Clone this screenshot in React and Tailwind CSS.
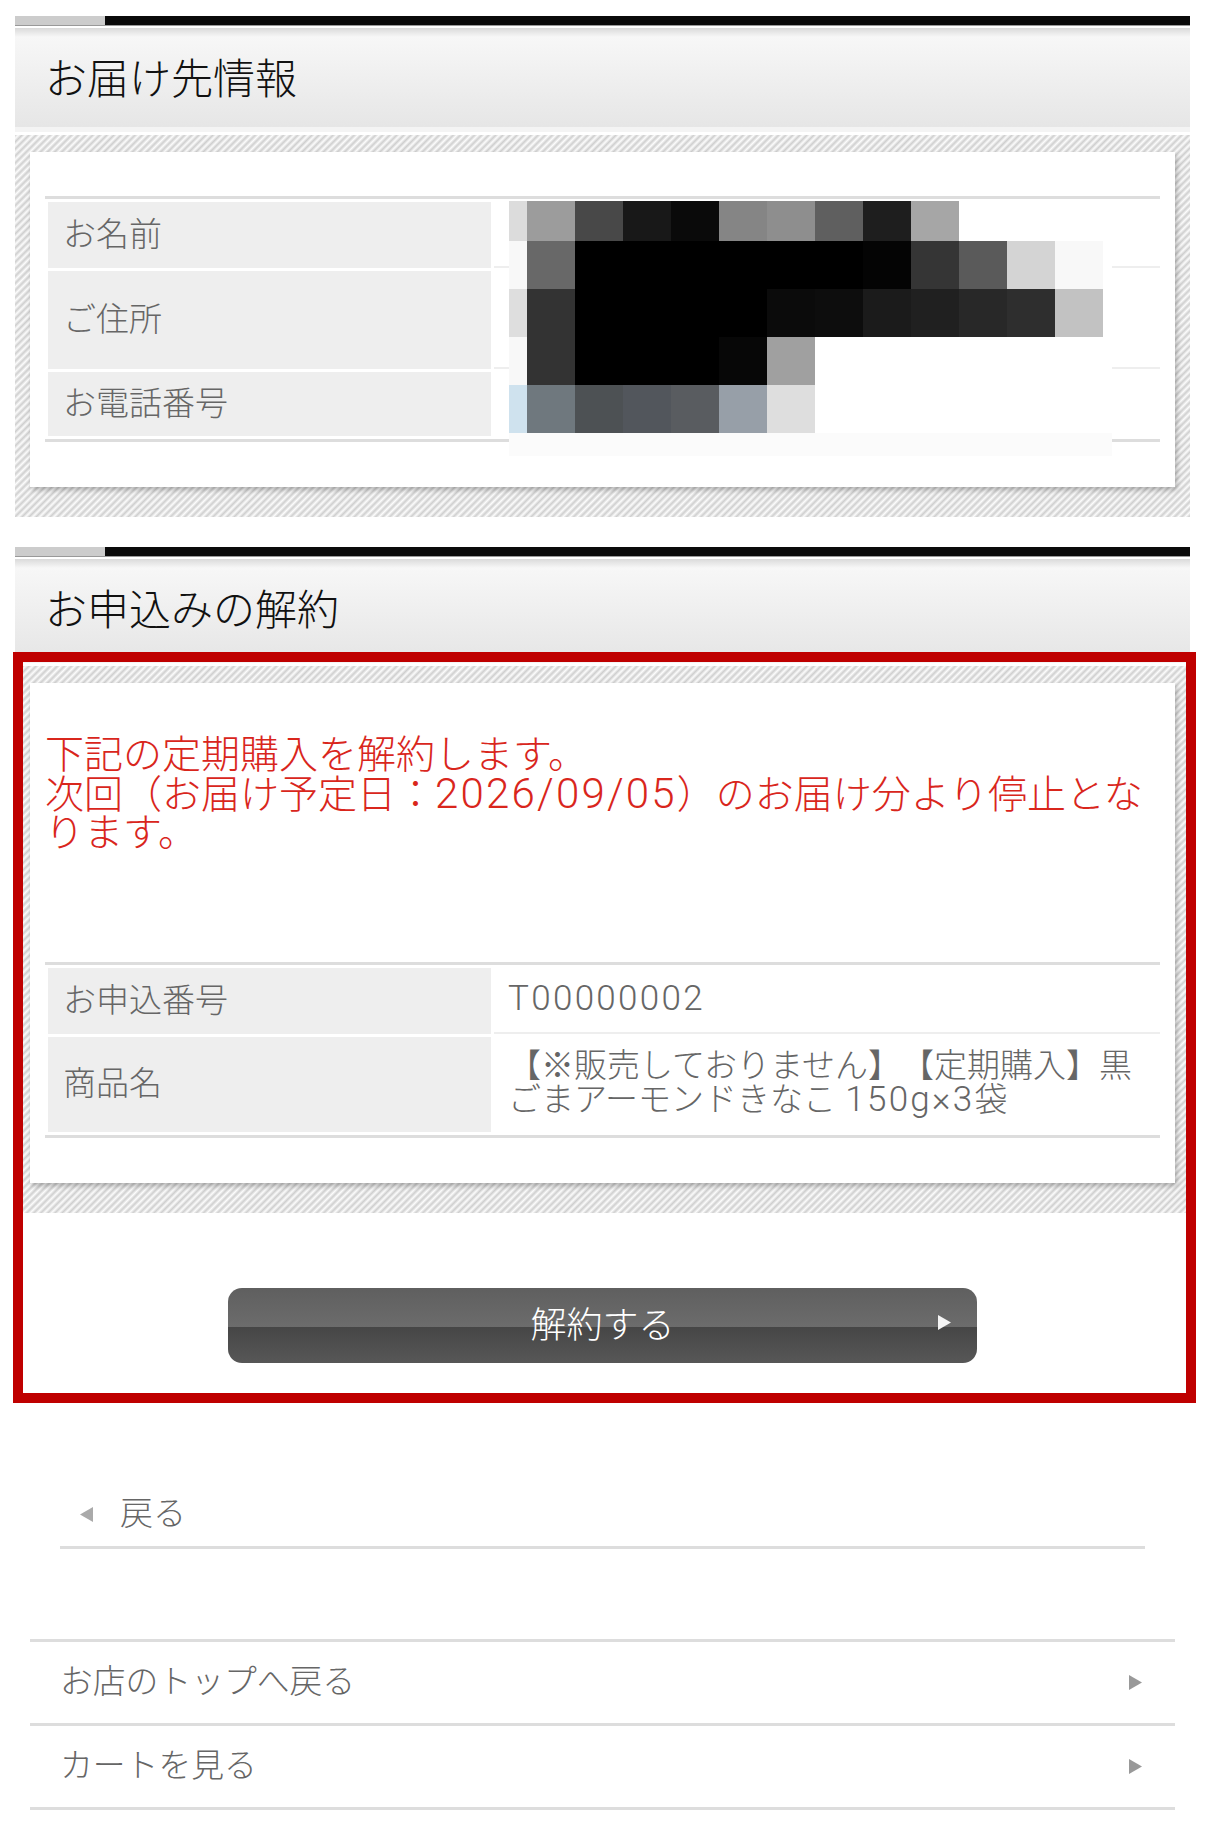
import React from "react";

const hatch =
  "bg-[repeating-linear-gradient(135deg,#cfcfcf_0,#fcfcfc_2.5px,#cfcfcf_5px)]";

// pixelated block over the customer's details
const mosaic = [
  { y: 0, h: 40, cells: ["#dcdcdc", "#9c9c9c", "#484848", "#181818", "#0a0a0a", "#858585", "#8e8e8e", "#5f5f5f", "#1e1e1e", "#a6a6a6"] },
  { y: 40, h: 48, cells: ["#f8f8f8", "#686868", "#000", "#000", "#000", "#000", "#000", "#000", "#040404", "#353535", "#5a5a5a", "#d4d4d4", "#f8f8f8"] },
  { y: 88, h: 48, cells: ["#dedede", "#333333", "#000", "#000", "#000", "#000", "#0b0b0b", "#0d0d0d", "#1b1b1b", "#202020", "#282828", "#2e2e2e", "#c2c2c2"] },
  { y: 136, h: 48, cells: ["#f8f8f8", "#333333", "#000", "#000", "#000", "#070707", "#a0a0a0"] },
  { y: 184, h: 48, cells: ["#cfe2ee", "#6f787e", "#4d5154", "#52565c", "#595c60", "#979fa8", "#dedede"] },
];

function Mosaic() {
  return (
    <svg width="603" height="255" className="absolute left-[464px] top-[2px]">
      <rect x="0" y="0" width="603" height="231" fill="#ffffff" />
      <rect x="0" y="232" width="603" height="23" fill="#fbfbfb" />
      {mosaic.map((row) =>
        row.cells.map((c, i) => (
          <rect
            key={row.y + "-" + i}
            x={i === 0 ? 0 : 18 + (i - 1) * 48}
            y={row.y}
            width={i === 0 ? 18 : 48}
            height={row.h}
            fill={c}
          />
        ))
      )}
    </svg>
  );
}

function Arrow({ left = false, color = "#999999" }) {
  return (
    <svg width="13" height="15" viewBox="0 0 13 15" className="shrink-0">
      {left ? (
        <polygon points="13,0 13,15 0,7.5" fill={color} />
      ) : (
        <polygon points="0,0 0,15 13,7.5" fill={color} />
      )}
    </svg>
  );
}

// the latin runs in the reference are bigger and wider than the kana around them
function Latin({ children, big }) {
  return (
    <span
      className={
        "font-['Roboto'] font-light " +
        (big ? "text-[42px] tracking-[2.2px]" : "text-[35px] tracking-[2.3px]")
      }
    >
      {children}
    </span>
  );
}

function SectionHead({ title }) {
  return (
    <div>
      <div className="flex h-[9px]">
        <div className="w-[90px] bg-[#cccccc]" />
        <div className="flex-1 bg-[#0a0a0a]" />
      </div>
      <div className="h-[1px] bg-[#999999]" />
      <div className="h-[2px]" />
      <div className="h-[99px] flex items-center pl-[30px] pt-[3px] text-[42px] text-[#111111] font-light bg-[linear-gradient(#dadada_0,#f7f7f7_9px,#e6e6e6_100%)]">
        {title}
      </div>
      <div className="h-[5px] bg-[#f4f4f4]" />
      <div className="h-[3px]" />
    </div>
  );
}

function Row({ label, h, last, children }) {
  return (
    <div className="flex" style={{ height: h }}>
      <div className="ml-[3px] w-[443px] bg-[#eeeeee] flex items-center pl-[15px] pb-[1px] text-[33px] text-[#666666] font-light">
        {label}
      </div>
      <div
        className={
          "ml-[3px] flex-1 flex items-center pl-[14px] pb-[3px] text-[33px] leading-[34px] text-[#666666] font-light " +
          (last ? "" : "border-b-[2px] border-[#eeeeee]")
        }
      >
        {children}
      </div>
    </div>
  );
}

function Table({ children }) {
  return (
    <div className="relative flex flex-col gap-[3px] py-[3px] border-y-[3px] border-[#dddddd]">
      {children}
    </div>
  );
}

function Panel({ children, className }) {
  return (
    <div className={"pt-[17px] pb-[30px] px-[15px] " + hatch}>
      <div className={"bg-white px-[15px] shadow-[2px_3px_5px_rgba(0,0,0,0.25)] " + className}>
        {children}
      </div>
    </div>
  );
}

function LinkRow({ label }) {
  return (
    <div className="h-[84px] flex items-center justify-between pl-[30px] pr-[33px] border-b-[3px] border-[#dddddd] text-[32.8px] text-[#666666] font-light">
      <span className="pb-[2px]">{label}</span>
      <Arrow />
    </div>
  );
}

export default function App() {
  return (
    <div className="relative w-[1206px] h-[1821px] bg-white pt-[16px] font-['Liberation_Sans','Noto_Sans_CJK_JP',sans-serif] [text-spacing-trim:space-all] overflow-hidden">
      <section className="ml-[15px] w-[1175px]">
        <SectionHead title="お届け先情報" />
        <Panel className="h-[335px] pt-[44px]">
          <Table>
            <Row label="お名前" h={66} />
            <Row label="ご住所" h={98} />
            <Row label="お電話番号" h={64} last />
            <Mosaic />
          </Table>
        </Panel>
      </section>

      <div className="relative mt-[30px]">
        <section className="ml-[15px] w-[1175px]">
          <SectionHead title="お申込みの解約" />
          <Panel className="h-[500px] pt-[53px]">
            <p className="h-[226px] text-[39px] leading-[38.7px] text-[#d9261c] font-light">
              下記の定期購入を解約します。
              <br />
              次回（お届け予定日：<Latin big>2026/09/05</Latin>）のお届け分より停止となります。
            </p>
            <Table>
              <Row label="お申込番号" h={66}>
                <Latin>T00000002</Latin>
              </Row>
              <Row label="商品名" h={95} last>
                <span>
                  【※販売しておりません】【定期購入】黒ごまアーモンドきなこ <Latin>150g×3</Latin>袋
                </span>
              </Row>
            </Table>
          </Panel>
        </section>

        <button className="relative mt-[75px] ml-[228px] w-[749px] h-[75px] flex items-center justify-center rounded-[14px] text-[36px] text-white font-light bg-[linear-gradient(#5f5f5f_0,#6c6c6c_52%,#464646_52%,#575757_100%)]">
          解約する
          <span className="absolute left-[710px] top-[27px]">
            <Arrow color="#f4f4f4" />
          </span>
        </button>

        {/* annotation frame drawn over the cancel block */}
        <div className="absolute left-[13px] top-[105px] w-[1183px] h-[751px] border-[10px] border-[#bf0000] pointer-events-none" />
      </div>

      <div className="mt-[114px] ml-[60px] w-[1085px] h-[72px] pt-[5px] flex items-center border-b-[3px] border-[#dddddd] text-[33px] text-[#666666] font-light">
        <span className="ml-[20px] mr-[27px]">
          <Arrow left color="#aaaaaa" />
        </span>
        戻る
      </div>

      <div className="mt-[90px] ml-[30px] w-[1145px] border-t-[3px] border-[#dddddd]">
        <LinkRow label="お店のトップへ戻る" />
        <LinkRow label="カートを見る" />
      </div>
    </div>
  );
}
